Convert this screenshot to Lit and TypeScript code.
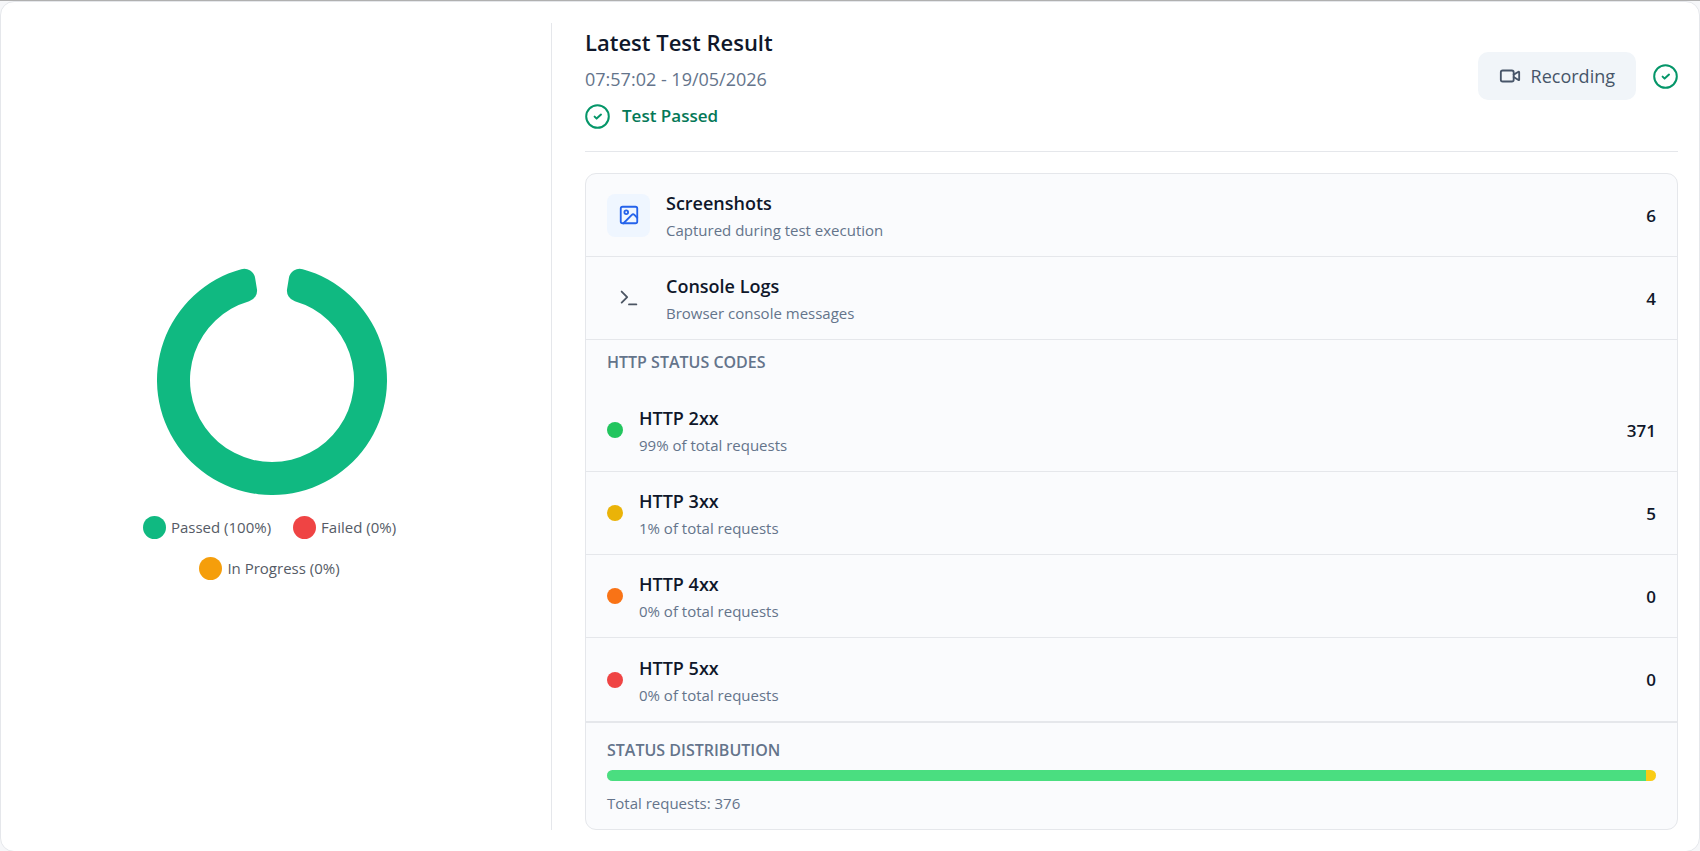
import { LitElement, html, css, svg } from "lit";
import { customElement, property } from "lit/decorators.js";

interface StatusGroup {
  label: string;
  count: number;
  percent: number;
  tone: string;
}

const STATUS_GROUPS: StatusGroup[] = [
  { label: "HTTP 2xx", count: 371, percent: 99, tone: "green" },
  { label: "HTTP 3xx", count: 5, percent: 1, tone: "yellow" },
  { label: "HTTP 4xx", count: 0, percent: 0, tone: "orange" },
  { label: "HTTP 5xx", count: 0, percent: 0, tone: "red" },
];

const LEGEND = [
  { label: "Passed", percent: 100, tone: "passed" },
  { label: "Failed", percent: 0, tone: "failed" },
  { label: "In Progress", percent: 0, tone: "progress" },
];

/** Outline of a ring that starts and ends `gap` degrees from twelve o'clock, with rounded corners. */
function ringPath(c: number, outer: number, inner: number, gap: number, corner: number): string {
  const g = (gap * Math.PI) / 180;
  const at = (r: number, a: number) => `${(c + r * Math.sin(a)).toFixed(2)} ${(c - r * Math.cos(a)).toFixed(2)}`;
  const outerTurn = Math.asin(corner / (outer - corner));
  const innerTurn = Math.asin(corner / (inner + corner));
  const outerEdge = (outer - corner) * Math.cos(outerTurn);
  const innerEdge = (inner + corner) * Math.cos(innerTurn);
  const round = `A ${corner} ${corner} 0 0 1`;
  return [
    `M ${at(outerEdge, g)}`,
    `${round} ${at(outer, g + outerTurn)}`,
    `A ${outer} ${outer} 0 1 1 ${at(outer, -g - outerTurn)}`,
    `${round} ${at(outerEdge, -g)}`,
    `L ${at(innerEdge, -g)}`,
    `${round} ${at(inner, -g - innerTurn)}`,
    `A ${inner} ${inner} 0 1 0 ${at(inner, g + innerTurn)}`,
    `${round} ${at(innerEdge, g)}`,
    "Z",
  ].join(" ");
}

const ICONS = {
  video: svg`<path d="m16 13 5.223 3.482a.5.5 0 0 0 .777-.416V7.87a.5.5 0 0 0-.752-.432L16 10.5"/><rect x="2" y="6" width="14" height="12" rx="2"/>`,
  image: svg`<rect x="3" y="3" width="18" height="18" rx="2"/><circle cx="9" cy="9" r="2"/><path d="m21 15-3.086-3.086a2 2 0 0 0-2.828 0L6 21"/>`,
  terminal: svg`<path d="m4 17 6-6-6-6"/><path d="M12 19h8"/>`,
};

@customElement("line-icon")
class LineIcon extends LitElement {
  @property() name: keyof typeof ICONS = "image";

  static styles = css`
    :host { display: flex; }
    .icon {
      width: 22px;
      height: 22px;
      fill: none;
      stroke: currentColor;
      stroke-width: 2;
      stroke-linecap: round;
      stroke-linejoin: round;
    }
  `;

  render() {
    return html`<svg class="icon" viewBox="0 0 24 24" aria-hidden="true">${ICONS[this.name]}</svg>`;
  }
}

@customElement("passed-icon")
class PassedIcon extends LitElement {
  static styles = css`
    :host { display: flex; color: #059669; }
    .icon { width: 25px; height: 25px; fill: none; stroke: currentColor; stroke-width: 2; }
  `;

  render() {
    return html`<svg class="icon" viewBox="0 0 25 25" aria-hidden="true">
      <circle cx="12.5" cy="12.5" r="11.3" />
      <path d="M9.6 12.6 11.6 14.6 16 10.6" stroke-linecap="round" stroke-linejoin="round" />
    </svg>`;
  }
}

@customElement("result-chart")
class ResultChart extends LitElement {
  static styles = css`
    :host { display: flex; flex-direction: column; align-items: center; justify-content: center; }
    .ring { width: 230px; height: 230px; fill: #10b981; }
    .legend {
      display: flex;
      flex-wrap: wrap;
      justify-content: center;
      column-gap: 22px;
      max-width: 320px;
      margin: 12px 0 0;
      padding: 0 4px 0 0;
      list-style: none;
      font-size: 15px;
      line-height: 41px;
      color: #555b66;
    }
    .item { display: flex; align-items: center; gap: 5px; }
    .swatch { width: 23px; height: 23px; border-radius: 50%; }
    .passed { background: #10b981; }
    .failed { background: #ef4444; }
    .progress { background: #f59e0b; }
  `;

  render() {
    return html`
      <svg class="ring" viewBox="0 0 230 230" role="img" aria-label="Passed 100%">
        <path d=${ringPath(115, 115, 82, 9.4, 11)} />
      </svg>
      <ul class="legend">
        ${LEGEND.map(
          (l) => html`<li class="item"><span class="swatch ${l.tone}"></span>${l.label} (${l.percent}%)</li>`
        )}
      </ul>
    `;
  }
}

@customElement("app-root")
class AppRoot extends LitElement {
  static styles = css`
    :host {
      display: flex;
      box-sizing: border-box;
      min-height: 100vh;
      border-top: 1px solid #b0b0b0;
      background: #f6f7f9;
      font-family: "Open Sans", "Noto Sans", sans-serif;
      color: #0f172a;
    }
    * { box-sizing: border-box; }
    h2, h3, p, ul { margin: 0; padding: 0; }
    .card {
      flex: 1;
      display: grid;
      grid-template-columns: repeat(3, minmax(0, 1fr));
      gap: 33px;
      padding: 21px;
      border: 1px solid #e5e7eb;
      border-radius: 14px;
      background: #fff;
    }
    .chart { padding-right: 30px; border-right: 1px solid #e5e7eb; }
    .result { grid-column: span 2; display: flex; flex-direction: column; gap: 21px; }
    .header {
      display: flex;
      align-items: center;
      justify-content: space-between;
      padding-bottom: 22px;
      border-bottom: 1px solid #e5e7eb;
    }
    .title { font-size: 22px; line-height: 38px; font-weight: 600; }
    .date { font-size: 18px; line-height: 36px; color: #64748b; }
    .verdict {
      display: flex;
      align-items: center;
      gap: 12px;
      margin-top: 6px;
      font-size: 17px;
      line-height: 26px;
      font-weight: 600;
      color: #047857;
    }
    .actions { display: flex; align-items: center; gap: 17px; }
    .recording {
      display: flex;
      align-items: center;
      gap: 10px;
      height: 48px;
      padding: 0 21px;
      border: 0;
      border-radius: 10px;
      background: #f1f5f9;
      color: #475569;
      font: inherit;
      font-size: 18px;
    }
    .panel { border: 1px solid #e5e7eb; border-radius: 11px; background: #fafbfd; }
    .rows { list-style: none; }
    .row {
      display: flex;
      align-items: center;
      gap: 16px;
      min-height: 83px;
      padding: 0 21px;
      border-bottom: 1px solid #e5e7eb;
    }
    .codes .row:last-child { border-bottom: 0; }
    .tile {
      display: flex;
      align-items: center;
      justify-content: center;
      width: 43px;
      height: 43px;
      border-radius: 8px;
      color: #4b5563;
    }
    .tile.blue { background: #eff6ff; color: #2563eb; }
    .dot { width: 16px; height: 16px; border-radius: 50%; }
    .dot.green { background: #22c55e; }
    .dot.yellow { background: #eab308; }
    .dot.orange { background: #f97316; }
    .dot.red { background: #ef4444; }
    .text { flex: 1; padding-top: 2px; }
    .name { font-size: 18px; line-height: 28px; font-weight: 600; }
    .note { font-size: 15px; line-height: 26px; color: #64748b; }
    .count { font-size: 17px; font-weight: 600; }
    .label { font-size: 16px; line-height: 22px; font-weight: 600; color: #64748b; text-transform: uppercase; }
    .codes-label { padding: 11px 21px 16px; }
    .distribution { padding: 16px 21px 15px; border-top: 2px solid #e5e7eb; }
    .bar { display: flex; height: 11px; margin: 9px 0 11px; border-radius: 6px; overflow: hidden; background: #e5e7eb; }
    .part.green { background: #4ade80; }
    .part.yellow { background: #facc15; }
    .part.orange { background: #fb923c; }
    .part.red { background: #f87171; }
    .total { font-size: 15px; line-height: 22px; color: #64748b; }
  `;

  render() {
    const total = STATUS_GROUPS.reduce((sum, g) => sum + g.count, 0);
    return html`
      <main class="card">
        <result-chart class="chart"></result-chart>
        <section class="result">
          <header class="header">
            <div>
              <h2 class="title">Latest Test Result</h2>
              <p class="date">07:57:02 - 19/05/2026</p>
              <p class="verdict"><passed-icon></passed-icon>Test Passed</p>
            </div>
            <div class="actions">
              <button class="recording" type="button"><line-icon name="video"></line-icon>Recording</button>
              <passed-icon></passed-icon>
            </div>
          </header>
          <div class="panel">
            <ul class="rows">
              <li class="row">
                <span class="tile blue"><line-icon name="image"></line-icon></span>
                <div class="text">
                  <h3 class="name">Screenshots</h3>
                  <p class="note">Captured during test execution</p>
                </div>
                <span class="count">6</span>
              </li>
              <li class="row">
                <span class="tile"><line-icon name="terminal"></line-icon></span>
                <div class="text">
                  <h3 class="name">Console Logs</h3>
                  <p class="note">Browser console messages</p>
                </div>
                <span class="count">4</span>
              </li>
            </ul>
            <h3 class="label codes-label">HTTP Status Codes</h3>
            <ul class="rows codes">
              ${STATUS_GROUPS.map(
                (g) => html`<li class="row">
                  <span class="dot ${g.tone}"></span>
                  <div class="text">
                    <h3 class="name">${g.label}</h3>
                    <p class="note">${g.percent}% of total requests</p>
                  </div>
                  <span class="count">${g.count}</span>
                </li>`
              )}
            </ul>
            <div class="distribution">
              <h3 class="label">Status Distribution</h3>
              <div class="bar">
                ${STATUS_GROUPS.map((g) => html`<span class="part ${g.tone}" style="width: ${g.percent}%"></span>`)}
              </div>
              <p class="total">Total requests: ${total}</p>
            </div>
          </div>
        </section>
      </main>
    `;
  }
}
